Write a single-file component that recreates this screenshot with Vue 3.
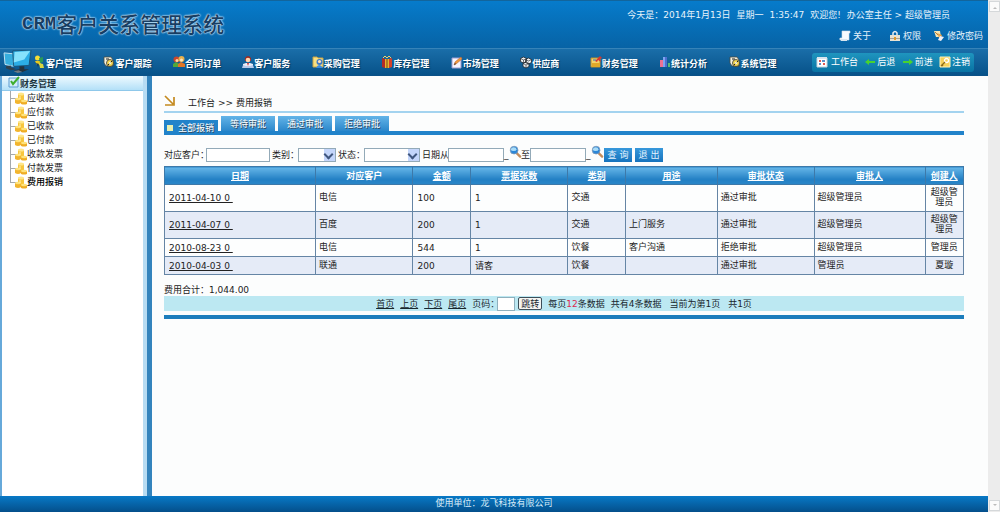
<script setup>
import { ref } from 'vue'

const modules = [
  { icon: 'person', name: '客户管理' },
  { icon: 'gear', name: '客户跟踪' },
  { icon: 'people', name: '合同订单' },
  { icon: 'service', name: '客户服务' },
  { icon: 'folder', name: '采购管理' },
  { icon: 'books', name: '库存管理' },
  { icon: 'pencil', name: '市场管理' },
  { icon: 'cubes', name: '供应商' },
  { icon: 'finance', name: '财务管理' },
  { icon: 'chart', name: '统计分析' },
  { icon: 'gear', name: '系统管理' }
]
const tools = [
  { icon: 'desk', name: '工作台' },
  { icon: 'back', name: '后退' },
  { icon: 'forward', name: '前进' },
  { icon: 'logout', name: '注销' }
]
const tree = ['应收款', '应付款', '已收款', '已付款', '收款发票', '付款发票', '费用报销']
const tabs = ['全部报销', '等待审批', '通过审批', '拒绝审批']
const columns = [
  { name: '日期', link: true },
  { name: '对应客户', link: false },
  { name: '金额', link: true },
  { name: '票据张数', link: true },
  { name: '类别', link: true },
  { name: '用途', link: true },
  { name: '审批状态', link: true },
  { name: '审批人', link: true },
  { name: '创建人', link: true }
]
const rows = [
  ['2011-04-10 0', '电信', '100', '1', '交通', '', '通过审批', '超级管理员', '超级管理员'],
  ['2011-04-07 0', '百度', '200', '1', '交通', '上门服务', '通过审批', '超级管理员', '超级管理员'],
  ['2010-08-23 0', '电信', '544', '1', '饮餐', '客户沟通', '拒绝审批', '超级管理员', '管理员'],
  ['2010-04-03 0', '联通', '200', '请客', '饮餐', '', '通过审批', '管理员', '夏璇']
]
const customer = ref('')
const dateFrom = ref('')
const dateTo = ref('')
const page = ref('')
</script>

<template>
  <svg class="sprite" aria-hidden="true">
    <symbol id="person" viewBox="0 0 12 14">
      <circle cx="3.5" cy="3" r="2.5" fill="#f4dc36" /><path d="M1 6h5l1 4H3z" fill="#e8c81e" />
      <path d="M5 3l4-1v5l-3 1z" fill="#2c9a54" /><path d="M5 8l4 1 1 4H6z" fill="#d8d642" /><path d="M2 8l3 1-1 3z" fill="#153b62" />
    </symbol>
    <symbol id="gear" viewBox="0 0 12 14">
      <path d="M1 2h7l2 3v6H3L1 8z" fill="#f4f1e0" stroke="#4a4d42" stroke-width=".8" /><circle cx="7" cy="8" r="3.5" fill="#f2d654" stroke="#333" stroke-width=".8" />
      <path d="M5 10l4-4M3 4h3" stroke="#222" /><circle cx="7" cy="8" r="1" fill="#fff" />
    </symbol>
    <symbol id="people" viewBox="0 0 12 14">
      <circle cx="3.5" cy="4.5" r="3" fill="#c9462c" /><circle cx="8.5" cy="4" r="3" fill="#e8b04c" />
      <path d="M0 12V9l3-2 3 2v3z" fill="#52a83a" /><path d="M5 12V9l3-2 4 2v3z" fill="#e27524" />
      <circle cx="4" cy="5.5" r="1.5" fill="#ffd9a6" /><circle cx="8.5" cy="5" r="1.5" fill="#ffe4bb" />
    </symbol>
    <symbol id="service" viewBox="0 0 12 14">
      <path d="M3 6V3q3-4 6 0v3z" fill="#9c2a22" /><circle cx="6" cy="5" r="2.3" fill="#ffd7b0" />
      <path d="M1 13V9l3-1h4l3 1v4z" fill="#e9eefa" /><path d="M5 8h2l-1 3z" fill="#cf3030" /><path d="M1 10l-1 3h12l-1-3-3 1H4z" fill="#b8c9ea" />
    </symbol>
    <symbol id="folder" viewBox="0 0 12 14">
      <path d="M1 2h4l1 1h5v9H1z" fill="#f8df80" stroke="#c7a346" /><circle cx="7.5" cy="7" r="3" fill="#3e7ac8" />
      <circle cx="7.5" cy="6.5" r="1.6" fill="#ffe0b8" /><path d="M4 13q3-6 7 0z" fill="#3a8be0" />
    </symbol>
    <symbol id="books" viewBox="0 0 12 14">
      <path d="M1 3l3 1v9l-3-1z" fill="#b32c26" /><path d="M4 4h4v9H4z" fill="#e9b430" /><path d="M8 4l3-1v9l-3 1z" fill="#d6402a" />
      <path d="M2 3l2-2 2 2 2-2 2 2" fill="none" stroke="#f2d26b" /><path d="M6 4v9" stroke="#774a16" />
    </symbol>
    <symbol id="pencil" viewBox="0 0 12 14">
      <path d="M1 3h9v10H1z" fill="#f5f4ff" stroke="#9a9bd0" /><path d="M3 10l1-3 6-5 1 2-6 5z" fill="#f19a3a" stroke="#b8643a" stroke-width=".6" /><path d="M3 10l1-2 1 1z" fill="#333" />
    </symbol>
    <symbol id="cubes" viewBox="0 0 12 14">
      <path d="M3.5 2l3 1.5v3l-3 1.5-3-1.5v-3zM8.5 3l3 1.5v3l-3 1.5-3-1.5v-3zM6 7l3 1.500v3L6 13l-3-1.500v-3z" fill="#eceef0" stroke="#25292e" stroke-width=".8" />
      <path d="M.5 3.500l3 1.500 3-1.500M3.500 5v3M5.500 4.500l3 1.500 3-1.500M3 8.500L6 10l3-1.500M6 10v3" fill="none" stroke="#25292e" stroke-width=".6" />
    </symbol>
    <symbol id="finance" viewBox="0 0 12 14">
      <path d="M1 3h9v9H1z" fill="#f3d36a" stroke="#b88e2c" /><path d="M2 8h8v4H2z" fill="#dfa928" />
      <path d="M5 6l5-5 2 2-2 1 1 3-3-2-1 2z" fill="#d8372e" /><path d="M3 5h3" stroke="#3b6fb0" />
    </symbol>
    <symbol id="chart" viewBox="0 0 12 14">
      <path d="M1 5h3v7H1z" fill="#ec7193" /><path d="M4 2h4v10H4z" fill="#7fa4f2" /><path d="M9 8h2v4H9z" fill="#5dba70" /><path d="M6 2h2v10H6z" fill="#4f6fd0" />
    </symbol>
    <symbol id="desk" viewBox="0 0 12 12">
      <path d="M1 2h10v9H1z" fill="#fff" stroke="#c5d2dd" /><path d="M1 1h10v2H1z" fill="#d7e4ee" />
      <path d="M3 4h2v2H3zM7 7h2v2H7z" fill="#e25750" /><path d="M6 4h3v2H6zM3 7h2v2H3z" fill="#5e91c9" />
    </symbol>
    <symbol id="back" viewBox="0 0 12 12"><path d="M1 6l4-3v2h6v2H5v2z" fill="#48d22f" /></symbol>
    <symbol id="forward" viewBox="0 0 12 12"><path d="M11 6L7 3v2H1v2h6v2z" fill="#48d22f" /></symbol>
    <symbol id="logout" viewBox="0 0 12 12">
      <path d="M1 1h10v10H1z" fill="#f5d15a" stroke="#fff2b8" /><circle cx="7.5" cy="4.5" r="2" fill="none" stroke="#fff" stroke-width="1.3" /><path d="M6 6l-4 4M3 9l1 1" stroke="#8a6a1a" stroke-width="1.3" />
    </symbol>
    <symbol id="scroll" viewBox="0 0 12 12">
      <path d="M3 1h8v2h-1v7H2q-2 0-1-2h2z" fill="#f8fbff" stroke="#d3dce6" stroke-width=".6" /><path d="M1 9h7v2H2z" fill="#d9e5ef" />
    </symbol>
    <symbol id="lock" viewBox="0 0 12 12">
      <path d="M4 5V3q2-3 4 0v2" fill="none" stroke="#e9edf0" stroke-width="1.5" /><path d="M1 5h10v6H1z" fill="#e8e2d2" /><path d="M1 8h10v1H1z" fill="#a7a294" /><path d="M5 7h2v3H5z" fill="#e09b2e" />
    </symbol>
    <symbol id="key" viewBox="0 0 12 12">
      <path d="M1 1h6l1 6H3z" fill="#f5e6b4" /><path d="M4 3l5 2-2 5z" fill="#e6a24a" /><path d="M7 6l4 1-3 4-3-1z" fill="#efeef5" /><path d="M2 2l3 3" stroke="#b87b3a" />
    </symbol>
    <symbol id="coins" viewBox="0 0 12 14">
      <path d="M3 3v7q3 2 6 0V3z" fill="#f7c63d" /><ellipse cx="6" cy="3" rx="3" ry="1.5" fill="#ffe68a" /><path d="M0 8v4q3 2 6 0V8z" fill="#f2b52e" />
      <ellipse cx="3" cy="8" rx="3" ry="1.3" fill="#ffe27a" /><path d="M6 10v3q3 1 6 0v-3z" fill="#efad24" /><ellipse cx="9" cy="10" rx="3" ry="1.3" fill="#ffe27a" /><path d="M5 5v3" stroke="#fff0ae" />
    </symbol>
    <symbol id="check" viewBox="0 0 12 12">
      <path d="M1 2h9v9H1z" fill="#d3ecfb" stroke="#5b9bd0" /><path d="M3 5l2 3 6-7" fill="none" stroke="#3fae2e" stroke-width="2" />
    </symbol>
    <symbol id="arrow" viewBox="0 0 12 12"><path d="M1 1l8 8M10 2v8H1" fill="none" stroke="#c48a20" stroke-width="1.7" /></symbol>
    <symbol id="glass" viewBox="0 0 14 14">
      <path d="M8 8l4 4" stroke="#c58d5c" stroke-width="2.5" stroke-linecap="round" /><circle cx="5.5" cy="5" r="4.2" fill="#2a86d8" /><ellipse cx="5" cy="4" rx="3" ry="2" fill="#a9dcf8" /><circle cx="5.5" cy="5" r="4.2" fill="none" stroke="#8a9db5" stroke-width=".8" />
    </symbol>
  </svg>

  <div class="app">
    <div class="page">
      <header class="banner">
        <h1><span class="latin">CRM</span>客户关系管理系统</h1>
        <div class="account">
          <p class="status">
            <span>今天是：2014年1月13日</span><span>星期一</span><span>1:35:47</span><span>欢迎您!</span><span>办公室主任 &gt; 超级管理员</span>
          </p>
          <div class="links">
            <a href="#"><svg class="ic"><use href="#scroll" /></svg>关于</a>
            <a href="#"><svg class="ic"><use href="#lock" /></svg>权限</a>
            <a href="#"><svg class="ic"><use href="#key" /></svg>修改密码</a>
          </div>
        </div>
      </header>

      <nav class="nav">
        <svg class="monitors" viewBox="0 0 32 26">
          <path d="M1 3l10 1v13L2 15z" fill="#36aede" stroke="#c3e5f4" />
          <path d="M10 1l19-1-2 16-16 1z" fill="#2caee6" stroke="#1b5478" />
          <path d="M12 2l16-1-6 9-11 3z" fill="#86e2fc" />
          <path d="M17 17h5v3h5l-7 3-9-2 6-1z" fill="#25323c" /><path d="M3 17l5-1v2l6 2-6 1-5-2z" fill="#31404b" /><path d="M11 22l5-1 4 2-5 1z" fill="#6d7a84" />
        </svg>
        <div class="modules">
          <a v-for="(m, i) in modules" :key="i" href="#"><svg class="ic tall"><use :href="'#' + m.icon" /></svg>{{ m.name }}</a>
        </div>
        <div class="tools">
          <a v-for="t in tools" :key="t.name" href="#"><svg class="ic"><use :href="'#' + t.icon" /></svg>{{ t.name }}</a>
        </div>
      </nav>

      <div class="body">
        <aside class="side">
          <h2><svg class="ic"><use href="#check" /></svg>财务管理</h2>
          <ul>
            <li v-for="(t, i) in tree" :key="t" :class="{ current: i === tree.length - 1 }">
              <a href="#"><svg class="ic tall"><use href="#coins" /></svg>{{ t }}</a>
            </li>
          </ul>
        </aside>

        <main class="main">
          <div class="crumbs">
            <svg class="ic"><use href="#arrow" /></svg>
            <a href="#">工作台</a><span>&gt;&gt;</span><span>费用报销</span>
          </div>
          <div class="tabs">
            <button v-for="(t, i) in tabs" :key="t" type="button" :class="{ active: i === 0 }">{{ t }}</button>
          </div>

          <form class="filter" @submit.prevent>
            <label class="wide" for="customer">对应客户：</label>
            <input id="customer" v-model="customer" class="customer" type="text">
            <label for="kind">类别：</label>
            <span class="pick small"><select id="kind"><option></option></select></span>
            <label for="state">状态：</label>
            <span class="pick"><select id="state"><option></option></select></span>
            <label for="from">日期从</label>
            <input id="from" v-model="dateFrom" type="text">
            <button class="lookup" type="button" aria-label="日期从">_<svg class="glass"><use href="#glass" /></svg></button>
            <label class="to" for="to">至</label>
            <input id="to" v-model="dateTo" type="text">
            <button class="lookup" type="button" aria-label="至">_<svg class="glass"><use href="#glass" /></svg></button>
            <button class="act" type="submit">查 询</button>
            <button class="act" type="button">退 出</button>
          </form>

          <table>
            <colgroup><col class="c1"><col class="c2"><col class="c3"><col class="c2"><col class="c3"><col class="c6"><col class="c7"><col class="c8"><col class="c9"></colgroup>
            <thead>
              <tr>
                <th v-for="c in columns" :key="c.name" scope="col"><a v-if="c.link" href="#">{{ c.name }}</a><template v-else>{{ c.name }}</template></th>
              </tr>
            </thead>
            <tbody>
              <tr v-for="(r, i) in rows" :key="i">
                <td v-for="(cell, j) in r" :key="j"><a v-if="j === 0" href="#">{{ cell }}&nbsp;</a><template v-else>{{ cell }}</template></td>
              </tr>
            </tbody>
          </table>

          <p class="total">费用合计：1,044.00</p>
          <form class="pager" @submit.prevent>
            <a href="#">首页</a><a href="#">上页</a><a href="#">下页</a><a href="#">尾页</a>
            <label for="page">页码：</label><input id="page" v-model="page" type="text">
            <button type="submit">跳转</button>
            <span>每页<b>12</b>条数据</span><span>共有4条数据</span><span class="spaced">当前为第1页</span><span class="spaced">共1页</span>
          </form>
          <div class="rule"></div>
        </main>
      </div>

      <footer class="foot">使用单位：龙飞科技有限公司</footer>
    </div>
    <div class="scroll" aria-hidden="true"><i class="up"></i><i class="down"></i></div>
  </div>
</template>

<style>
body { margin: 0; background: #fcfdfd; }
</style>

<style scoped>
* { box-sizing: border-box; }
.sprite { display: block; width: 0; height: 0; }
.app {
  display: flex;
  min-height: 100vh;
  font: 9px/12px "DejaVu Sans", "Noto Sans CJK SC", sans-serif;
  color: #222;
}
.page { flex: 1; min-width: 0; display: flex; flex-direction: column; }
a { color: inherit; text-decoration: none; white-space: nowrap; }
h1, h2, p, ul { margin: 0; padding: 0; }
input, select, button { font: inherit; color: inherit; margin: 0; padding: 0; border-radius: 0; }
.ic { width: 12px; height: 12px; flex: none; }
.ic.tall { height: 14px; }

.banner {
  display: flex;
  justify-content: space-between;
  height: 48px;
  padding: 0 5px 0 22px;
  border-top: 1px solid #12659c;
  background: linear-gradient(#067bcb, #0763a5);
  color: #e6f3fb;
}
h1 {
  display: flex;
  font: 500 21px/44px "Noto Sans CJK SC", sans-serif;
  color: #173e63;
  text-shadow: 0 0 2px #cfe8f8, 0 0 2px #cfe8f8, 0 0 1px #b9dcf4;
  white-space: nowrap;
}
.latin { font: bold 19px/46px "Liberation Mono", monospace; }
.account { display: flex; flex-direction: column; align-items: flex-end; padding-top: 8px; }
.status { display: flex; gap: 6px; padding-right: 33px; white-space: nowrap; }
.links { display: flex; margin-top: 9px; gap: 12px; }
.links a { display: flex; align-items: center; gap: 2px; }
.links a:first-child { margin-right: 6px; }

.nav {
  display: flex;
  align-items: center;
  height: 28px;
  padding: 0 14px 0 3px;
  border-top: 1px solid #3683b8;
  border-bottom: 1px solid #0c5288;
  background: linear-gradient(#1a6ea9, #075289);
  color: #fff;
}
.monitors { width: 31px; height: 25px; flex: none; }
.modules { flex: 1; display: grid; grid-template-columns: repeat(11, 1fr); margin-right: 14px; padding-top: 3px; }
.modules a { display: flex; align-items: center; font-weight: bold; text-shadow: 1px 1px 1px #053a60; }
.modules .ic { margin-bottom: 3px; }
.tools {
  display: flex;
  align-items: center;
  justify-content: space-between;
  width: 162px;
  height: 19px;
  padding: 0 4px;
  border-radius: 3px;
  background: linear-gradient(#1f95bf, #0873a3);
}
.tools a { display: flex; align-items: center; gap: 1px; }
.tools a:first-child { gap: 3px; }

.body { flex: 1; display: flex; background: #fcfdfd; }
.side {
  width: 152px;
  flex: none;
  border-left: 2px solid #66a9da;
  border-right: 5px solid #3484bd;
  background: linear-gradient(90deg, #fff, #fff) 0 0 / calc(100% - 4px) 100% no-repeat #b7dcf3;
}
.side h2 {
  display: flex;
  height: 15px;
  margin-right: 4px;
  padding-left: 6px;
  border-bottom: 1px solid #8fc8ea;
  background: linear-gradient(#effaff, #b3e0f8);
  font-size: 9px;
  line-height: 17px;
  color: #1d3440;
}
.side ul { list-style: none; padding-left: 8px; }
.side li {
  display: flex;
  height: 14px;
  padding-left: 5px;
  background: linear-gradient(#a5a9ab, #a5a9ab) 0 0 / 1px 100% no-repeat, linear-gradient(#a5a9ab, #a5a9ab) 0 7px / 6px 1px no-repeat;
}
.side li.current {
  color: #000;
  font-weight: 500;
  background: linear-gradient(#a5a9ab, #a5a9ab) 0 0 / 1px 8px no-repeat, linear-gradient(#a5a9ab, #a5a9ab) 0 7px / 6px 1px no-repeat;
}
.side li a { display: flex; align-items: center; }

.main { flex: 1; min-width: 0; padding: 18px 24px 0 12px; }
.crumbs { display: flex; align-items: center; height: 19px; border-bottom: 2px solid #a3d3ef; }
.crumbs .ic { margin: 0 12px 4px 0; }
.crumbs span { margin-left: 3px; }
.tabs {
  display: flex;
  gap: 3px;
  height: 22px;
  padding-top: 3px;
  border-bottom: 4px solid #2183ca;
}
.tabs button {
  width: 54px;
  height: 15px;
  border: 0;
  background: linear-gradient(#63b4e8, #2b87cb);
  color: #fff;
  line-height: 12px;
  text-shadow: 1px 1px 0 #33485a;
  white-space: nowrap;
}
.tabs .active {
  display: flex;
  align-items: center;
  justify-content: space-between;
  margin-top: 4px;
  padding: 1px 4px 0 3px;
  background: #2183ca;
}
.tabs .active::before { content: ""; width: 6px; height: 6px; background: #e9efb0; }

.filter { display: flex; align-items: center; height: 31px; padding-top: 8px; white-space: nowrap; }
.filter label { width: 26px; }
.filter label.wide { width: 42px; }
.filter label.to { width: 9px; }
.filter input, .filter select { width: 56px; height: 14px; border: 1px solid #93aab8; background: #fff; }
.filter input.customer { width: 64px; margin-right: 2px; }
.pick { position: relative; width: 56px; margin-right: 2px; }
.pick.small { width: 38px; }
.pick select { display: block; width: 100%; appearance: none; }
.pick::before { content: ""; position: absolute; right: 1px; top: 1px; width: 11px; height: 12px; background: #c4d6fb; pointer-events: none; }
.pick::after {
  content: "";
  position: absolute;
  right: 4px;
  top: 3px;
  width: 5px;
  height: 5px;
  border: solid #40577f;
  border-width: 0 2px 2px 0;
  transform: rotate(45deg);
  pointer-events: none;
}
.lookup { display: flex; align-items: center; width: 17px; height: 14px; border: 0; background: none; }
.glass { width: 13px; height: 14px; flex: none; margin-bottom: 6px; }
.act { width: 28px; height: 14px; margin-left: 2px; border: 0; background: linear-gradient(#3798db, #1673bd); color: #e6f4ff; line-height: 12px; }
.act + .act { margin-left: 3px; }
.lookup + .act { margin-left: 1px; }

table { width: 100%; border-collapse: collapse; table-layout: fixed; border: 1px solid #4c7ca8; }
.c1 { width: 18.9%; }
.c2 { width: 12.2%; }
.c3 { width: 7.2%; }
.c6 { width: 11.5%; }
.c7 { width: 12.1%; }
.c8 { width: 13.9%; }
.c9 { width: 4.8%; }
th {
  height: 18px;
  padding: 0;
  border: 1px solid #3d79a9;
  background: linear-gradient(#66b6e8, #2380c4 70%, #2a86c8);
  color: #fff;
  font-size: 9px;
  line-height: 12px;
}
th a, td a, .pager a { text-decoration: underline; }
td { height: 18px; padding: 0 4px; border: 1px solid #6585a5; line-height: 10px; background: #fdfefe; vertical-align: middle; }
td:nth-child(2), td:nth-child(n + 5) { padding: 0 3px 2px; }
td:last-child { text-align: center; }
tbody tr:nth-child(-n + 2) td { height: 27px; }
tbody tr:nth-child(even) td { background: #e5ebf7; }

.total { padding: 9px 0 0; }
.pager { display: flex; align-items: center; justify-content: center; gap: 6px; height: 15px; background: #bce8f2; white-space: nowrap; color: #18262d; }
.pager label { width: 19px; }
.pager input { width: 18px; height: 14px; border: 1px solid #8fb0bd; background: #fff; }
.pager button { width: 24px; height: 13px; margin-left: -3px; border: 1px solid #3d4e58; border-radius: 2px; background: #f4f4f0; line-height: 10px; }
.pager b { font-weight: normal; color: #dc2b50; }
.pager .spaced { margin-left: 2px; }
.rule { height: 4px; margin-top: 4px; background: #1c7dbc; }

.foot { height: 16px; background: linear-gradient(#0879c6, #044f8b); color: #d9ecf8; line-height: 14px; text-align: center; }

.scroll { display: flex; flex-direction: column; justify-content: space-between; width: 12px; flex: none; padding: 1px 0 1px 1px; background: #ececec; }
.scroll i { height: 11px; border: 1px solid #d5d8da; background: #fbfbfb; display: grid; place-items: center; }
.scroll i::before { content: ""; border: 2px solid transparent; }
.scroll .up::before { border-bottom-color: #bbb; }
.scroll .down::before { border-top-color: #bbb; }
</style>
